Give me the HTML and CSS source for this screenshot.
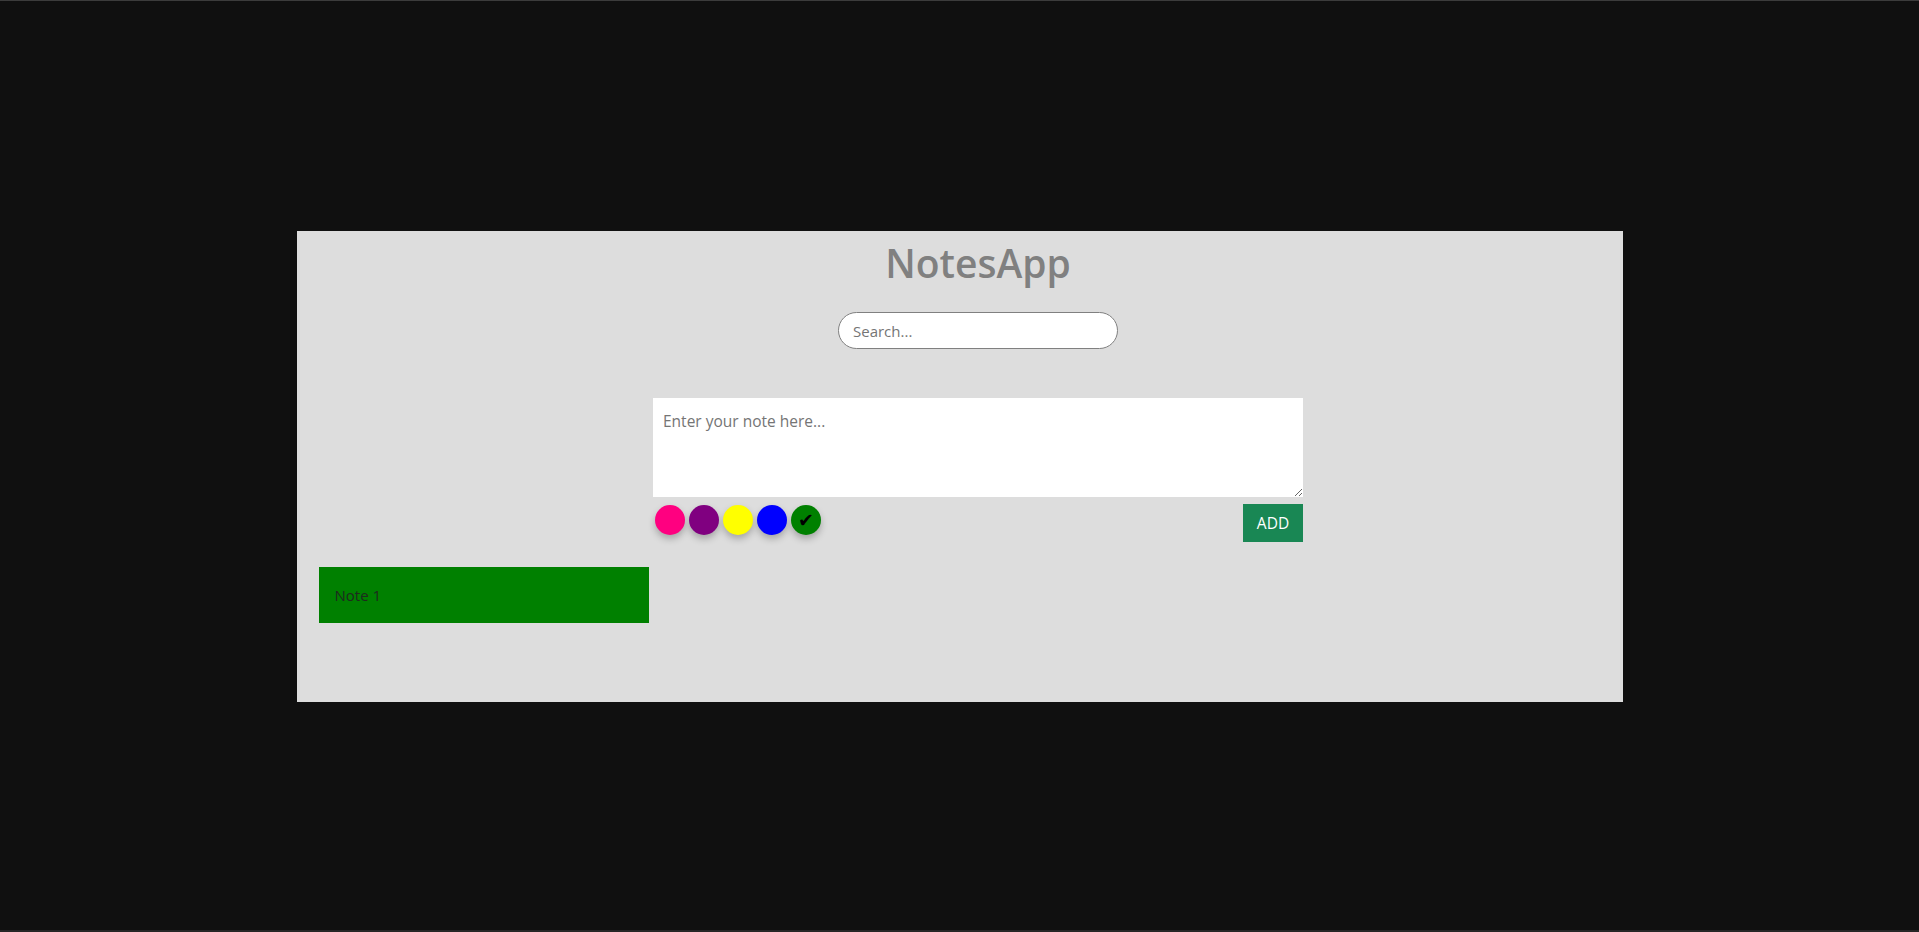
FILE: index.html
```html
<!DOCTYPE html>
<html lang="en">
<head>
<meta charset="utf-8">
<title>NotesApp</title>
<link rel="stylesheet" href="styles.css">
</head>
<body>
  <main class="app">
    <section class="top">
      <h1 class="title">NotesApp</h1>
      <input class="search" type="text" placeholder="Search...">
      <div class="composer">
        <textarea class="note-input" placeholder="Enter your note here..."></textarea>
        <div class="controls">
          <div class="colors">
            <span class="dot dot-pink"></span>
            <span class="dot dot-purple"></span>
            <span class="dot dot-yellow"></span>
            <span class="dot dot-blue"></span>
            <span class="dot dot-green">✔</span>
          </div>
          <button class="add-btn" type="button">ADD</button>
        </div>
      </div>
    </section>
    <section class="notes">
      <div class="note note-green">Note 1</div>
    </section>
  </main>
</body>
</html>
```

FILE: styles.css
```css
* { box-sizing: border-box; }

html, body {
  margin: 0;
  padding: 0;
}

body {
  min-height: 932px;
  background: #101010;
  border-top: 1px solid #3c3c3c;
  border-bottom: 2px solid #262626;
  padding-top: 2px;
  display: flex;
  align-items: center;
  justify-content: center;
  font-family: "Open Sans", "Noto Sans", sans-serif;
}

.app {
  width: 1326px;
  background: #dddddd;
  padding: 5px 22px 79px 22px;
}

.top {
  display: flex;
  flex-direction: column;
  align-items: center;
  padding-left: 37px;
}

.title {
  margin: 0;
  font-size: 39px;
  font-weight: 600;
  line-height: 54px;
  color: #808080;
}

.search {
  margin-top: 22px;
  width: 280px;
  height: 37px;
  border: 1px solid #808080;
  border-radius: 19px;
  background: #fff;
  padding: 0 14px;
  font-family: inherit;
  font-size: 15px;
  color: #333;
  outline: none;
}

.search::placeholder { color: #757575; }

.composer {
  margin-top: 49px;
  width: 650px;
  display: flex;
  flex-direction: column;
}

.note-input {
  display: block;
  width: 650px;
  height: 99px;
  border: none;
  background: #fff;
  padding: 12px 10px;
  font-family: inherit;
  font-size: 15.5px;
  color: #333;
  outline: none;
}

.note-input::placeholder { color: #757575; }

.controls {
  margin-top: 7px;
  display: flex;
  justify-content: space-between;
  align-items: flex-start;
}

.colors {
  display: flex;
  align-items: center;
}

.dot {
  width: 30px;
  height: 30px;
  margin: 1px 2px;
  border-radius: 50%;
  box-shadow: 0 4px 7px rgba(0, 0, 0, 0.25);
  display: flex;
  align-items: center;
  justify-content: center;
  font-family: "DejaVu Sans", sans-serif;
  font-size: 19px;
  color: #000;
}

.dot-pink { background: #ff0080; }
.dot-purple { background: #800080; }
.dot-yellow { background: #ffff00; }
.dot-blue { background: #0000ff; }
.dot-green { background: #008000; }

.add-btn {
  width: 60px;
  height: 38px;
  border: none;
  background: #198754;
  color: #fff;
  font-family: inherit;
  font-size: 15.5px;
  padding: 0;
}

.notes {
  margin-top: 25px;
  display: flex;
  flex-wrap: wrap;
  gap: 16px;
}

.note {
  width: 330px;
  height: 56px;
  padding: 0 16px;
  display: flex;
  align-items: center;
  font-size: 15px;
  color: #1e2a1e;
}

.note-green { background: #008000; }
```
